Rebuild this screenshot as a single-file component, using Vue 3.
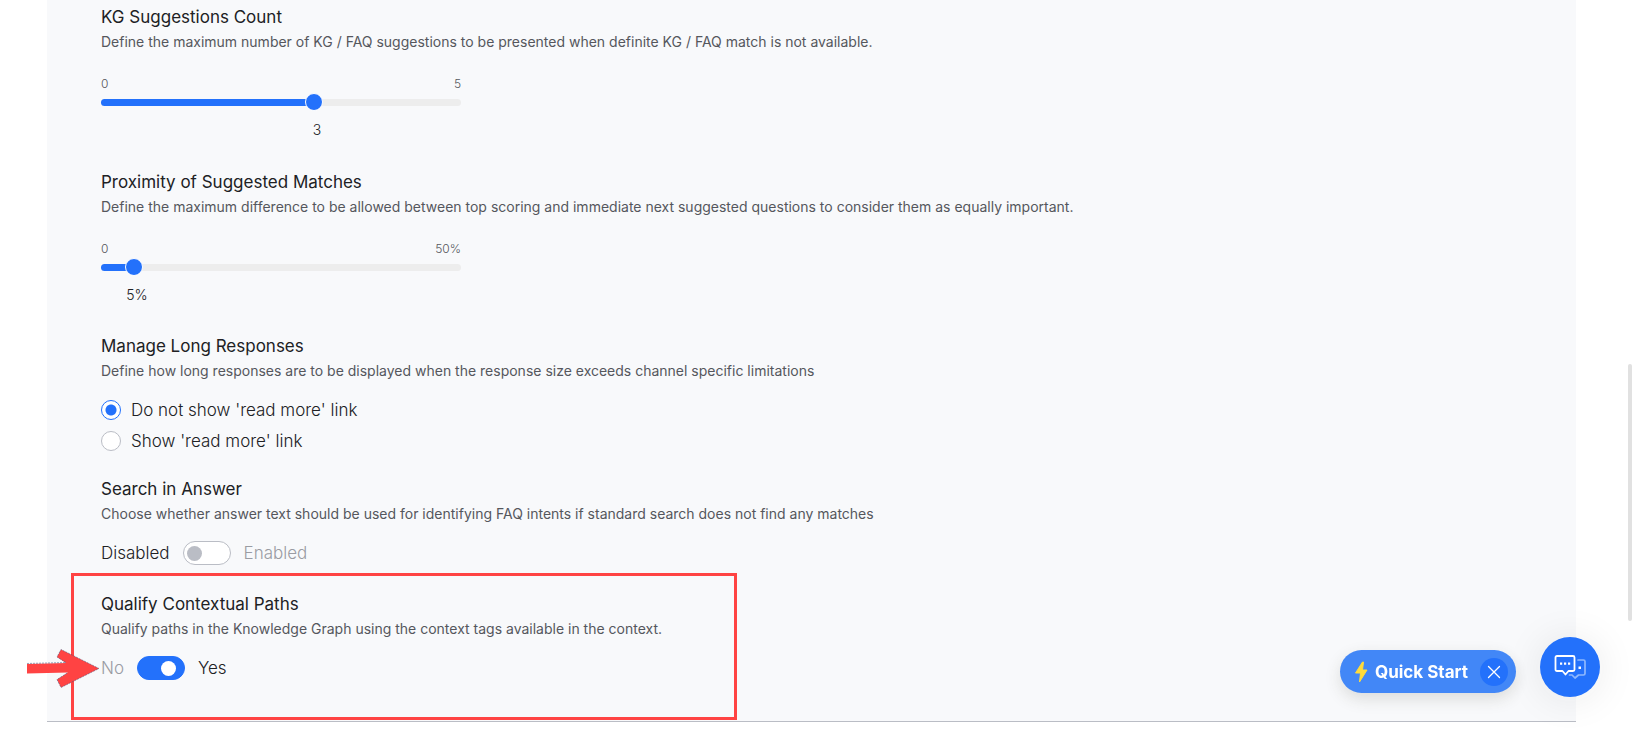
<script setup>
import { ref } from 'vue'

const sliders = ref([
  {
    id: 'kg-count',
    title: 'KG Suggestions Count',
    text: 'Define the maximum number of KG / FAQ suggestions to be presented when definite KG / FAQ match is not available.',
    value: 3,
    max: 5,
    unit: ''
  },
  {
    id: 'proximity',
    title: 'Proximity of Suggested Matches',
    text: 'Define the maximum difference to be allowed between top scoring and immediate next suggested questions to consider them as equally important.',
    value: 5,
    max: 50,
    unit: '%'
  }
])
const percent = (s) => (s.value / s.max) * 100 + '%'

const readMore = ref('hide')
const searchInAnswer = ref(false)
const qualifyPaths = ref(true)
</script>

<template>
  <div class="page">
    <main class="panel">
      <section v-for="s in sliders" :key="s.id" class="setting slider-setting">
        <h2 :id="s.id + '-title'">{{ s.title }}</h2>
        <p>{{ s.text }}</p>
        <div class="slider">
          <div class="limits"><span>0</span><span>{{ s.max }}{{ s.unit }}</span></div>
          <div class="track">
            <div class="fill" :style="{ width: percent(s) }"></div>
            <input v-model.number="s.value" type="range" min="0" :max="s.max" :aria-labelledby="s.id + '-title'" />
          </div>
          <div class="value-row">
            <output :style="{ left: percent(s) }">{{ s.value }}{{ s.unit }}</output>
          </div>
        </div>
      </section>

      <section class="setting radio-setting">
        <h2>Manage Long Responses</h2>
        <p>Define how long responses are to be displayed when the response size exceeds channel specific limitations</p>
        <div class="radios">
          <label><input v-model="readMore" type="radio" name="read-more" value="hide" />Do not show 'read more' link</label>
          <label><input v-model="readMore" type="radio" name="read-more" value="show" />Show 'read more' link</label>
        </div>
      </section>

      <section class="setting">
        <h2>Search in Answer</h2>
        <p>Choose whether answer text should be used for identifying FAQ intents if standard search does not find any matches</p>
        <label class="switch">
          <span :class="{ off: searchInAnswer }">Disabled</span>
          <input v-model="searchInAnswer" type="checkbox" role="switch" />
          <span :class="{ off: !searchInAnswer }">Enabled</span>
        </label>
      </section>

      <section class="setting highlighted">
        <h2>Qualify Contextual Paths</h2>
        <p>Qualify paths in the Knowledge Graph using the context tags available in the context.</p>
        <label class="switch">
          <span :class="{ off: qualifyPaths }">No</span>
          <input v-model="qualifyPaths" type="checkbox" role="switch" />
          <span :class="{ off: !qualifyPaths }">Yes</span>
        </label>
        <svg class="arrow" viewBox="0 0 74 42" width="74" height="42" aria-hidden="true">
          <path d="M1 16 L40 15 L31 9 L35 1.500 L73 20.500 L35 39.500 L31 31.500 L42 24.500 L1 25.500Z" fill="#ff4343" />
          <path d="M1 15.500 L40 14.500 L31 9 L35 1.500 L73 20.500 L35 39.500 L31 31.500 L42 24.500" fill="none" stroke="#35507a" stroke-width="1" stroke-dasharray="2 1" opacity=".5" />
        </svg>
      </section>
    </main>

    <div class="scrollbar"></div>

    <aside class="floating">
      <div class="quick-start">
        <button type="button" class="start">
          <svg viewBox="0 0 14 22" width="14" height="22" aria-hidden="true">
            <path d="M8.500 1 L1.500 12 H6.500 L5.500 21 L13 9 H8.500 L9.500 1Z" fill="#ffdb3b" stroke="#ffdb3b" stroke-linejoin="round" />
          </svg>
          Quick Start
        </button>
        <button type="button" class="close" aria-label="Close">
          <svg viewBox="0 0 14 14" width="14" height="14" aria-hidden="true">
            <path d="M1.500 1.500 12.500 12.500M12.500 1.500 1.500 12.500" stroke="#fff" stroke-width="1.300" stroke-linecap="round" />
          </svg>
        </button>
      </div>
      <button type="button" class="chat" aria-label="Open chat">
        <svg viewBox="0 0 32 26" width="32" height="26" fill="none" stroke-linejoin="round" stroke-linecap="round" aria-hidden="true">
          <path d="M24 6H29.500Q31 6 31 7.500V19.500Q31 21 29.500 21H24.500L21 24L18 21H15.500" stroke="#8fb8fd" stroke-width="1.700" />
          <path d="M3 2H19Q20.500 2 20.500 3.500V15.500Q20.500 17 19 17H14.500L11.500 20.500L8.500 17H3Q1.500 17 1.500 15.500V3.500Q1.500 2 3 2Z" stroke="#fff" stroke-width="1.800" />
          <path d="M6 8.500H8.200V10.700H6ZM10 8.500H12.200V10.700H10ZM14 8.500H16.200V10.700H14ZM24.500 12.500H27V15H24.500Z" fill="#fff" />
        </svg>
      </button>
    </aside>
  </div>
</template>

<style>
body {
  background: #fff;
}
</style>

<style scoped>
.page {
  box-sizing: border-box;
  min-height: 100vh;
  padding: 0 61px 12px 47px;
  font-family: Inter, "Liberation Sans", sans-serif;
  color: #202124;
}
.panel {
  box-sizing: border-box;
  padding: 5px 54px 0;
  background: #f8f9fb;
  border-bottom: 1px solid #babdc5;
}
h2 {
  margin: 0;
  font-size: 17px;
  line-height: 24px;
  font-weight: 400;
}
p {
  margin: 0;
  font-size: 14px;
  line-height: 26px;
  font-weight: 400;
  color: #55575d;
}
.slider-setting {
  height: 165px;
}
.slider-setting + .slider-setting {
  height: 164px;
}
.slider {
  width: 360px;
  margin-top: 21px;
}
.limits {
  display: flex;
  justify-content: space-between;
  font-size: 12px;
  line-height: 16px;
  font-weight: 300;
  color: #55575d;
}
.track {
  position: relative;
  height: 7px;
  margin-top: 7px;
  border-radius: 4px;
  background: #ededed;
}
.fill {
  height: 100%;
  border-radius: 4px;
  background: #2371fb;
}
.track input {
  appearance: none;
  position: absolute;
  top: -6px;
  left: -12px;
  width: calc(100% + 18px);
  height: 18px;
  margin: 0;
  background: transparent;
}
.track input::-webkit-slider-thumb {
  appearance: none;
  box-sizing: border-box;
  width: 18px;
  height: 18px;
  border: 1px solid #fff;
  border-radius: 50%;
  background: #2371fb;
}
.value-row {
  position: relative;
  height: 20px;
  margin-top: 14px;
}
output {
  position: absolute;
  transform: translateX(-50%);
  font-size: 14px;
  line-height: 20px;
  font-weight: 300;
}
.radio-setting {
  height: 143px;
}
.radios {
  display: grid;
  gap: 7px;
  margin-top: 14px;
}
.radios label {
  display: flex;
  align-items: center;
  gap: 10px;
  font-size: 17px;
  line-height: 24px;
  font-weight: 300;
}
.radios input {
  appearance: none;
  box-sizing: border-box;
  width: 20px;
  height: 20px;
  margin: 0;
  border: 1px solid #babdc5;
  border-radius: 50%;
  background: #fff;
}
.radios input:checked {
  border-color: #2371fb;
  background: radial-gradient(circle, #2371fb 5px, #fff 6px);
}
.switch {
  display: flex;
  align-items: center;
  width: fit-content;
  gap: 13px;
  margin-top: 14px;
  font-size: 17px;
  line-height: 24px;
  font-weight: 300;
}
.off {
  color: #9a9ca3;
}
.switch input {
  appearance: none;
  box-sizing: border-box;
  display: flex;
  align-items: center;
  width: 48px;
  height: 24px;
  margin: 0;
  padding: 0 3px;
  border: 1px solid #babdc5;
  border-radius: 12px;
  background: #fff;
}
.switch input::before {
  content: "";
  width: 15px;
  height: 15px;
  border-radius: 50%;
  background: #babdc5;
}
.switch input:checked {
  justify-content: flex-end;
  padding-right: 8px;
  border-color: #2371fb;
  background: #2371fb;
}
.switch input:checked::before {
  background: #fff;
}
.highlighted {
  position: relative;
  box-sizing: border-box;
  max-width: 666px;
  margin: 8px 0 1px -30px;
  padding: 16px 27px 37px;
  border: 3px solid #ff4343;
}
.arrow {
  position: absolute;
  top: 72px;
  left: -48px;
}
.scrollbar {
  position: fixed;
  top: 364px;
  right: 5px;
  width: 4px;
  height: 257px;
  border-radius: 2px;
  background: #e1e1e1;
}
.floating {
  position: fixed;
  right: 37px;
  bottom: 37px;
  display: flex;
  align-items: flex-end;
  gap: 24px;
}
button {
  display: flex;
  align-items: center;
  justify-content: center;
  padding: 0;
  border: 0;
  color: #fff;
  font-family: inherit;
}
.quick-start {
  display: flex;
  align-items: center;
  gap: 12px;
  margin-bottom: 4px;
  padding: 8px 8px 7px 14px;
  border-radius: 22px;
  background: #4287f7;
  box-shadow: 0 6px 16px rgba(60, 60, 40, 0.15);
}
.start {
  gap: 7px;
  background: transparent;
  font-size: 17px;
  line-height: 24px;
  font-weight: 700;
}
.close {
  width: 28px;
  height: 28px;
  border-radius: 50%;
  background: #2371fb;
}
.chat {
  width: 60px;
  height: 60px;
  border-radius: 50%;
  background: #2371fb;
  box-shadow: 0 2px 40px rgba(32, 33, 36, 0.09);
}
</style>
